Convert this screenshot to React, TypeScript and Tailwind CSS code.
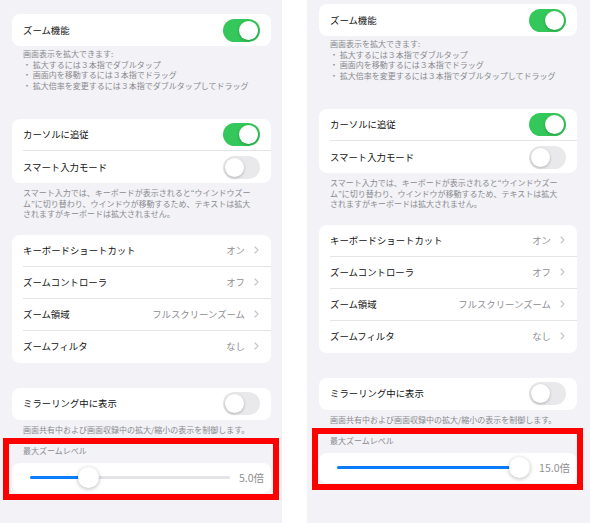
import React from "react";

type Panel = {
  top: string; // padding-top class
  width: string;
  pad: string;
  redWrap: string;
  redInner: string;
  zoom: number;
  zoomLabel: string;
};

const panels: Panel[] = [
  {
    top: "pt-[14px]",
    width: "w-[282px]",
    pad: "pl-[12px] pr-[11px]",
    redWrap: "-ml-[9px] -mr-[8px]",
    redInner: "pl-[3px] pr-[2px]",
    zoom: 0.27,
    zoomLabel: "5.0倍",
  },
  {
    top: "pt-[4px]",
    width: "w-[283px]",
    pad: "pl-[12px] pr-[13px]",
    redWrap: "-ml-[7px] -mr-[6px]",
    redInner: "pl-[1px] pr-0",
    zoom: 1,
    zoomLabel: "15.0倍",
  },
];

function Toggle({ on }: { on: boolean }) {
  return (
    <div
      className={
        "relative h-[23px] w-[37px] shrink-0 rounded-full " + (on ? "bg-[#34c759]" : "bg-[#e9e9eb]")
      }
    >
      <div
        className={
          "absolute top-[2px] h-[19px] w-[19px] rounded-full bg-white shadow-[0_1px_3px_rgba(0,0,0,0.25)] " +
          (on ? "right-[2px]" : "left-[2px]")
        }
      />
    </div>
  );
}

function Chevron() {
  return (
    <svg width="5" height="8" viewBox="0 0 5 8" className="shrink-0">
      <path d="M1 1l3 3-3 3" fill="none" stroke="#c4c4c8" strokeWidth="1.1" strokeLinecap="round" strokeLinejoin="round" />
    </svg>
  );
}

function Row({ label, last, children }: { label: string; last?: boolean; children?: React.ReactNode }) {
  return (
    <div
      className={
        "ml-[11px] flex h-[32px] items-center justify-between pr-[11px] " +
        (last ? "" : "border-b border-[#e4e4e8]")
      }
    >
      <span className="text-[9.4px] text-[#111]">{label}</span>
      {children}
    </div>
  );
}

function LinkValue({ value }: { value: string }) {
  return (
    <div className="flex items-center gap-[9px] pr-[1px]">
      <span className="text-[9.4px] text-[#8e8e93]">{value}</span>
      <Chevron />
    </div>
  );
}

function Card({ children, className = "" }: { children: React.ReactNode; className?: string }) {
  return <div className={"overflow-hidden rounded-[8px] bg-white " + className}>{children}</div>;
}

function Note({ children, className = "" }: { children: React.ReactNode; className?: string }) {
  return <div className={"pl-[11px] text-[8px] leading-[10.5px] text-[#8a8a8e] " + className}>{children}</div>;
}

function SettingsPanel({ p }: { p: Panel }) {
  return (
    <div className={"h-[523px] shrink-0 bg-[#f2f2f7] " + p.width + " " + p.top + " " + p.pad}>
      <Card>
        <Row label="ズーム機能" last>
          <Toggle on />
        </Row>
      </Card>
      <Note className="mt-[3px]">
        <div>画面表示を拡大できます:</div>
        <div>・ 拡大するには３本指でダブルタップ</div>
        <div>・ 画面内を移動するには３本指でドラッグ</div>
        <div>・ 拡大倍率を変更するには３本指でダブルタップしてドラッグ</div>
      </Note>

      <Card className="mt-[28px]">
        <Row label="カーソルに追従">
          <Toggle on />
        </Row>
        <Row label="スマート入力モード" last>
          <Toggle on={false} />
        </Row>
      </Card>
      <Note className="mt-[5px] whitespace-nowrap">
        <div>スマート入力では、キーボードが表示されると“ウインドウズー</div>
        <div>ム”に切り替わり、ウインドウが移動するため、テキストは拡大</div>
        <div>されますがキーボードは拡大されません。</div>
      </Note>

      <Card className="mt-[15px]">
        <Row label="キーボードショートカット">
          <LinkValue value="オン" />
        </Row>
        <Row label="ズームコントローラ">
          <LinkValue value="オフ" />
        </Row>
        <Row label="ズーム領域">
          <LinkValue value="フルスクリーンズーム" />
        </Row>
        <Row label="ズームフィルタ" last>
          <LinkValue value="なし" />
        </Row>
      </Card>

      <Card className="mt-[25px]">
        <Row label="ミラーリング中に表示" last>
          <Toggle on={false} />
        </Row>
      </Card>
      <Note className="mt-[5px] whitespace-nowrap">画面共有中および画面収録中の拡大/縮小の表示を制御します。</Note>

      <div className={"mt-[3px] border-[6px] border-[#ff0000] pb-[1px] pt-[2px] " + p.redWrap + " " + p.redInner}>
        <Note>最大ズームレベル</Note>
        <div className="mt-[6px] flex h-[30px] items-center gap-[9px] rounded-[8px] bg-white pl-[18px] pr-[7px]">
          <div className="relative h-[3px] flex-1 rounded-full bg-[#e4e4e8]">
            <div
              className="absolute left-0 top-0 h-[3px] rounded-full bg-[#0a7cff]"
              style={{ width: `calc(${p.zoom} * (100% - 21px) + 10px)` }}
            />
            <div
              className="absolute top-[-9px] h-[21px] w-[21px] rounded-full bg-white shadow-[0_1px_4px_rgba(0,0,0,0.28)]"
              style={{ left: `calc(${p.zoom} * (100% - 21px))` }}
            />
          </div>
          <span className="text-[10.5px] text-[#8e8e93]">{p.zoomLabel}</span>
        </div>
      </div>
    </div>
  );
}

export default function App() {
  return (
    <div className="flex h-[523px] w-[590px] gap-[25px] overflow-hidden bg-white font-['Noto_Sans_CJK_JP',sans-serif]">
      {panels.map((p, i) => (
        <SettingsPanel key={i} p={p} />
      ))}
    </div>
  );
}
